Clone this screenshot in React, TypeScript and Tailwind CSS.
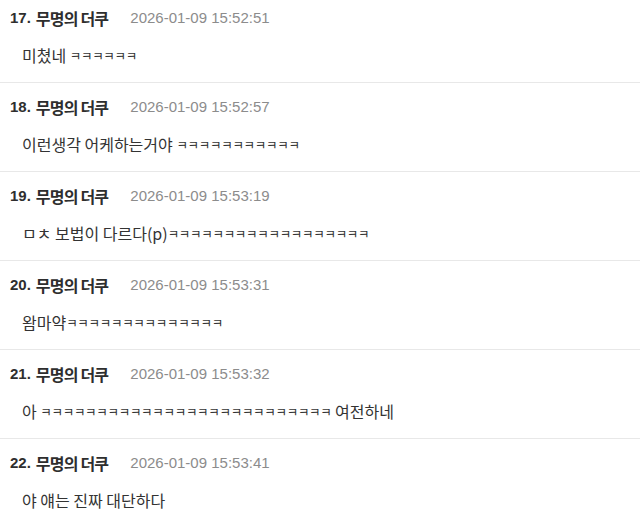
import React from "react";

type Item = { n: number; time: string; body: string };

const k = (c: number) => "ㅋ".repeat(c);

const items: Item[] = [
  { n: 17, time: "2026-01-09 15:52:51", body: "미쳤네 " + k(6) },
  { n: 18, time: "2026-01-09 15:52:57", body: "이런생각 어케하는거야 " + k(11) },
  { n: 19, time: "2026-01-09 15:53:19", body: "ㅁㅊ 보법이 다르다(p)" + k(18) },
  { n: 20, time: "2026-01-09 15:53:31", body: "왐마약" + k(14) },
  { n: 21, time: "2026-01-09 15:53:32", body: "아 " + k(26) + " 여전하네" },
  { n: 22, time: "2026-01-09 15:53:41", body: "야 얘는 진짜 대단하다" },
];

const latin = "font-['Liberation_Sans','Noto_Sans_CJK_KR',sans-serif]";
const kr = "font-['Noto_Sans_CJK_KR','Liberation_Sans',sans-serif]";

function Body({ text }: { text: string }) {
  const parts = text.split(/(ㅋ+)/).filter((p) => p.length > 0);
  return (
    <>
      {parts.map((p, i) =>
        p[0] === "ㅋ" ? (
          <span key={i} className="text-[12.5px] tracking-[-0.3px] align-[1px]">
            {p}
          </span>
        ) : (
          <span key={i}>{p}</span>
        )
      )}
    </>
  );
}

export default function App() {
  return (
    <div className="w-[640px] h-[523px] overflow-hidden bg-white">
      {items.map((it, i) => (
        <div
          key={it.n}
          className={`flex flex-col border-b border-[#e8e8e8] pb-[17px] ${i === 0 ? "pt-[8px]" : "pt-[14px]"}`}
        >
          <div className="flex items-center h-[20px] pl-[10px] text-[#2e2e2e]">
            <span className={`${latin} font-bold text-[15px] leading-[20px]`}>{it.n}.</span>
            <span className={`${kr} font-bold text-[16px] leading-[20px] tracking-[-0.8px] ml-[5px]`}>
              무명의 더쿠
            </span>
            <span className={`${latin} text-[15px] leading-[20px] text-[#8c8c8c] ml-[22px]`}>{it.time}</span>
          </div>
          <div
            className={`${kr} mt-[17px] h-[20px] pl-[22px] text-[16px] leading-[20px] text-[#333333] whitespace-nowrap`}
          >
            <Body text={it.body} />
          </div>
        </div>
      ))}
    </div>
  );
}
